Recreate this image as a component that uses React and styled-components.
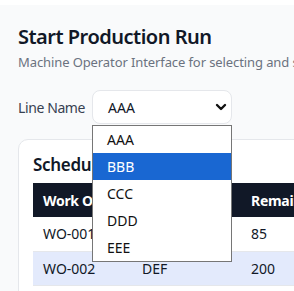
import React from 'react';
import styled, { createGlobalStyle } from 'styled-components';

const GlobalStyle = createGlobalStyle`
  html, body {
    margin: 0;
    padding: 0;
    background: #ffffff;
    overflow: hidden;
  }
  body {
    font-family: "Noto Sans", "Open Sans", Arial, sans-serif;
  }
`;

const Page = styled.div`
  margin-top: 5px;
  min-height: 300px;
  background: #f9fafb;
  padding: 18px 0 0 18px;
  overflow: hidden;
`;

const Title = styled.h1`
  margin: 0;
  font-size: 20px;
  line-height: 28px;
  font-weight: 600;
  letter-spacing: -0.5px;
  color: #111827;
  white-space: nowrap;
`;

const Subtitle = styled.p`
  margin: 1px 0 0;
  font-size: 13px;
  line-height: 20px;
  letter-spacing: -0.1px;
  color: #6b7280;
  white-space: nowrap;
`;

const FieldRow = styled.div`
  display: flex;
  align-items: center;
  margin-top: 18px;
`;

const Label = styled.label`
  width: 74px;
  font-size: 14px;
  letter-spacing: -0.4px;
  color: #374151;
  white-space: nowrap;
`;

const SelectWrap = styled.div`
  position: relative;
  width: 140px;
`;

const SelectBox = styled.div`
  box-sizing: border-box;
  height: 34px;
  display: flex;
  align-items: center;
  justify-content: space-between;
  padding: 0 3px 0 15px;
  background: #ffffff;
  border: 1px solid #e5e7eb;
  border-radius: 8px;
  font-size: 14px;
  color: #111827;
`;

const Menu = styled.ul`
  position: absolute;
  top: 35px;
  left: 0;
  width: 140px;
  box-sizing: border-box;
  margin: 0;
  padding: 0;
  list-style: none;
  background: #ffffff;
  border: 1px solid #767676;
  z-index: 10;
`;

const Option = styled.li`
  height: 27px;
  display: flex;
  align-items: center;
  padding-left: 14px;
  font-size: 14px;
  color: ${p => (p.$active ? '#ffffff' : '#111111')};
  background: ${p => (p.$active ? '#1967d2' : 'transparent')};
`;

const Card = styled.section`
  margin-top: 15px;
  width: 520px;
  background: #ffffff;
  border: 1px solid #e5e7eb;
  border-radius: 10px;
  padding: 13px 14px 14px;
`;

const CardTitle = styled.h2`
  margin: 0 0 6px;
  font-size: 17px;
  line-height: 24px;
  font-weight: 600;
  letter-spacing: -0.3px;
  color: #111827;
`;

const Table = styled.table`
  border-collapse: collapse;
  table-layout: fixed;
  width: 426px;
`;

const Th = styled.th`
  box-sizing: border-box;
  width: ${p => p.$w}px;
  height: 34px;
  padding: 0 0 0 10px;
  text-align: left;
  font-size: 14px;
  font-weight: 700;
  letter-spacing: -0.3px;
  color: #ffffff;
  background: #111827;
  white-space: nowrap;
  overflow: hidden;
`;

const Row = styled.tr`
  background: ${p => (p.$selected ? '#e3eafc' : '#ffffff')};
  border-bottom: 1px solid #e5e7eb;
`;

const Td = styled.td`
  box-sizing: border-box;
  height: 34px;
  padding: 0 0 0 10px;
  font-size: 14px;
  color: #111827;
  white-space: nowrap;
`;

const Chevron = () => (
  <svg width="14" height="12" viewBox="0 0 14 12">
    <polyline points="3,4 7,8 11,4" fill="none" stroke="#111" strokeWidth="2.4" strokeLinecap="round" strokeLinejoin="round" />
  </svg>
);

const lines = ['AAA', 'BBB', 'CCC', 'DDD', 'EEE'];

const columns = [
  { label: 'Work Order', width: 99 },
  { label: 'Product', width: 109 },
  { label: 'Remaining Qty', width: 118 },
  { label: 'Status', width: 100 }
];

const orders = [
  { id: 'WO-001', product: 'ABC', remaining: 85, selected: false },
  { id: 'WO-002', product: 'DEF', remaining: 200, selected: true }
];

const App = () => (
  <>
    <GlobalStyle />
    <Page>
      <Title>Start Production Run</Title>
      <Subtitle>Machine Operator Interface for selecting and starting production runs</Subtitle>

      <FieldRow>
        <Label>Line Name</Label>
        <SelectWrap>
          <SelectBox>
            AAA
            <Chevron />
          </SelectBox>
          <Menu>
            {lines.map(line => (
              <Option key={line} $active={line === 'BBB'}>{line}</Option>
            ))}
          </Menu>
        </SelectWrap>
      </FieldRow>

      <Card>
        <CardTitle>Scheduled Work Orders</CardTitle>
        <Table>
          <thead>
            <tr>
              {columns.map(c => (
                <Th key={c.label} $w={c.width}>{c.label}</Th>
              ))}
            </tr>
          </thead>
          <tbody>
            {orders.map(o => (
              <Row key={o.id} $selected={o.selected}>
                <Td>{o.id}</Td>
                <Td>{o.product}</Td>
                <Td>{o.remaining}</Td>
                <Td>Ready</Td>
              </Row>
            ))}
          </tbody>
        </Table>
      </Card>
    </Page>
  </>
);

export default App;
